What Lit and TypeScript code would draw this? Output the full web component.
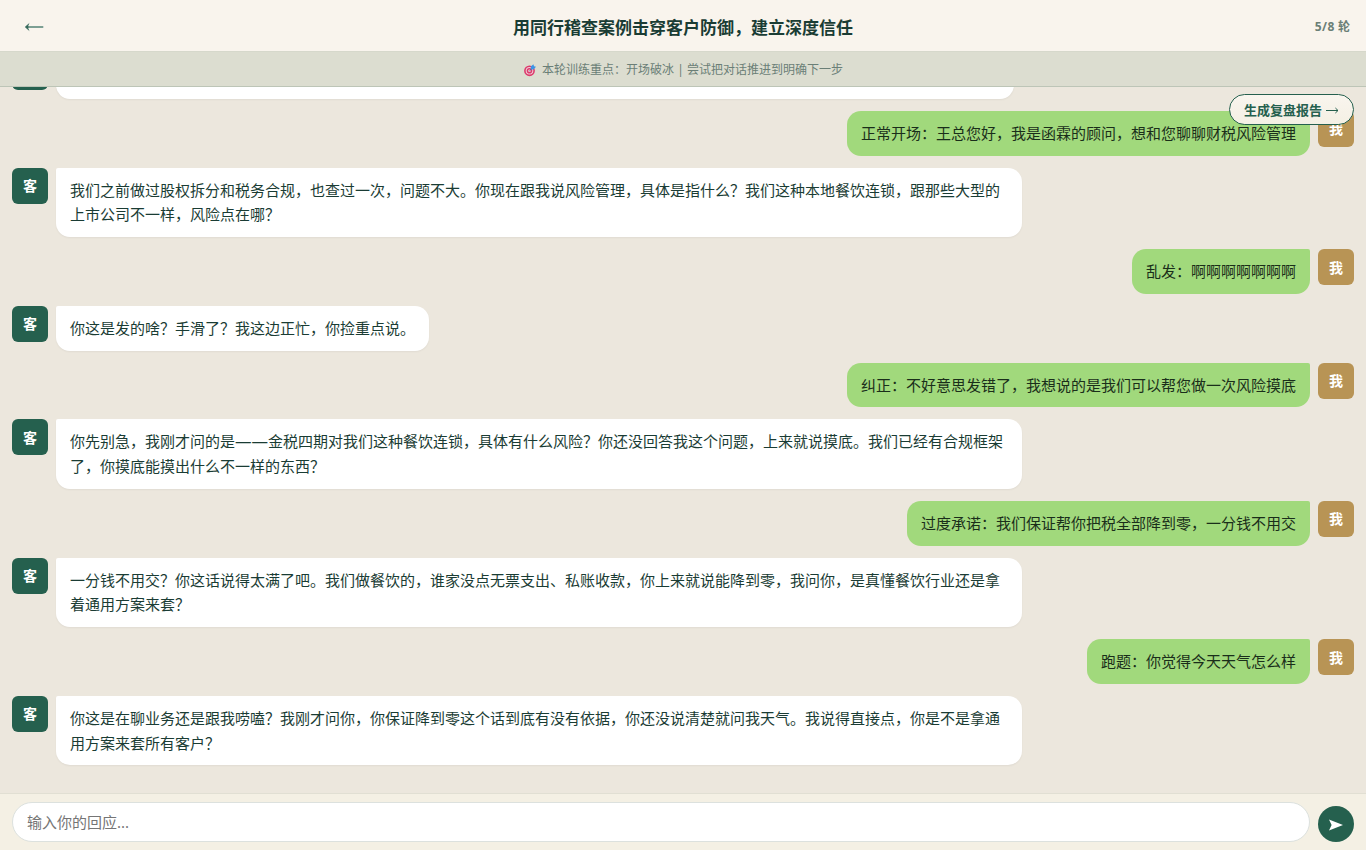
import { LitElement, html, css, svg } from "lit";
import { customElement } from "lit/decorators.js";
import { classMap } from "lit/directives/class-map.js";

interface Message {
  me: boolean;
  text: unknown;
}

const messages: Message[] = [
  { me: false, text: "" },
  { me: true, text: "正常开场：王总您好，我是函霖的顾问，想和您聊聊财税风险管理" },
  { me: false, text: "我们之前做过股权拆分和税务合规，也查过一次，问题不大。你现在跟我说风险管理，具体是指什么？我们这种本地餐饮连锁，跟那些大型的上市公司不一样，风险点在哪？" },
  { me: true, text: "乱发：啊啊啊啊啊啊啊" },
  { me: false, text: "你这是发的啥？手滑了？我这边正忙，你捡重点说。" },
  { me: true, text: "纠正：不好意思发错了，我想说的是我们可以帮您做一次风险摸底" },
  { me: false, text: html`你先别急，我刚才问的是<span class="dash">——</span>金税四期对我们这种餐饮连锁，具体有什么风险？你还没回答我这个问题，上来就说摸底。我们已经有合规框架了，你摸底能摸出什么不一样的东西？` },
  { me: true, text: "过度承诺：我们保证帮你把税全部降到零，一分钱不用交" },
  { me: false, text: "一分钱不用交？你这话说得太满了吧。我们做餐饮的，谁家没点无票支出、私账收款，你上来就说能降到零，我问你，是真懂餐饮行业还是拿着通用方案来套？" },
  { me: true, text: "跑题：你觉得今天天气怎么样" },
  { me: false, text: "你这是在聊业务还是跟我唠嗑？我刚才问你，你保证降到零这个话到底有没有依据，你还没说清楚就问我天气。我说得直接点，你是不是拿通用方案来套所有客户？" },
];

const target = svg`
  <circle cx="5.5" cy="6.8" r="5.4" fill="#dc3a6c"/>
  <circle cx="5.5" cy="6.8" r="3.8" fill="#f0cdd6"/>
  <circle cx="5.5" cy="6.8" r="2.8" fill="#dc3a6c"/>
  <circle cx="5.5" cy="6.8" r="1.3" fill="#f0cdd6"/>
  <path d="M5.5 6.8L9 3.4" stroke="#5b5f78" stroke-width="1"/>
  <path d="M6.8 5.6V2.6L9.4 .2l.6 2 2 .6-2.4 2.6z" fill="#3b94e6"/>`;

@customElement("app-root")
export class AppRoot extends LitElement {
  static styles = css`
    :host {
      display: flex;
      flex-direction: column;
      height: 100vh;
      overflow: hidden;
      background: #ece7dd;
      color: #1a3c34;
      font-family: "Noto Sans", "Noto Sans CJK SC", sans-serif;
    }
    * { box-sizing: border-box; }
    svg { display: block; flex: none; }
    header {
      flex: none;
      height: 51px;
      padding: 0 16px;
      display: grid;
      grid-template-columns: 1fr auto 1fr;
      align-items: center;
      background: #f9f4ed;
    }
    .back { padding: 2px 0 0 8px; }
    h1 {
      margin: 0;
      padding-top: 4px;
      font-size: 17px;
      line-height: 24px;
      font-weight: 700;
    }
    .round {
      padding-top: 3px;
      text-align: right;
      font-size: 12px;
      line-height: 18px;
      font-weight: 700;
      color: #6b7f77;
    }
    .count { letter-spacing: 0.5px; }
    .focus {
      flex: none;
      height: 36px;
      padding: 2px 0 0 1px;
      display: flex;
      align-items: center;
      justify-content: center;
      gap: 6px;
      background: #dcddd0;
      border-top: 1px solid #d6d8cb;
      border-bottom: 1px solid #bdc5b7;
      font-size: 12px;
      line-height: 18px;
      color: #6b7f77;
    }
    main {
      position: relative;
      flex: 1;
      min-height: 0;
      overflow: hidden;
      padding: 0 12px 27.75px;
      display: flex;
      flex-direction: column;
      justify-content: flex-end;
      gap: 12px;
    }
    .row { flex: none; display: flex; gap: 8px; align-items: flex-start; }
    .row.me { flex-direction: row-reverse; }
    .avatar {
      flex: none;
      width: 36px;
      height: 36px;
      padding-top: 1px;
      border-radius: 6px;
      display: grid;
      place-items: center;
      background: #25604e;
      color: #fff;
      font-size: 14px;
      font-weight: 700;
      line-height: 20px;
    }
    .me .avatar { background: #b89455; }
    .bubble {
      max-width: 72%;
      min-height: 44.75px;
      padding: 10px 14px;
      border-radius: 2px 14px 14px 14px;
      background: #fff;
      box-shadow: 0 1px 2px rgba(0, 0, 0, 0.05);
      font-size: 15px;
      line-height: 24.75px;
    }
    .me .bubble {
      border-radius: 14px 2px 14px 14px;
      background: #a1d97c;
      color: #1a2e1a;
      box-shadow: none;
    }
    .blank { width: 958px; }
    .dash { font-size: 16.5px; line-height: 1; }
    .report {
      position: absolute;
      top: 7px;
      right: 12px;
      width: 125px;
      height: 31px;
      display: flex;
      align-items: center;
      justify-content: center;
      gap: 4px;
      border: 1px solid #25604e;
      border-radius: 16px;
      background: linear-gradient(#f9f5ee, #f4f0e4);
      color: #25604e;
      font-size: 13px;
      line-height: 18px;
      font-weight: 700;
      white-space: nowrap;
    }
    .report svg { margin-top: 2px; }
    footer {
      flex: none;
      height: 57px;
      padding: 8px 12px;
      display: flex;
      gap: 8px;
      background: #f4f0e4;
      border-top: 1px solid #e1dfd3;
    }
    .field {
      flex: 1;
      height: 40px;
      padding: 0 14px;
      display: flex;
      align-items: center;
      border: 1px solid #dce1de;
      border-radius: 20px;
      background: #fff;
      color: #757575;
      font-size: 15px;
      line-height: 22px;
    }
    .send {
      width: 36px;
      height: 36px;
      margin-top: 4px;
      padding-top: 2px;
      border-radius: 50%;
      background: #25604e;
      display: grid;
      place-items: center;
    }
  `;

  render() {
    return html`
      <header>
        <div class="back">
          <svg width="20" height="10" viewBox="0 0 20 10" fill="none">
            <path d="M3 5h16.3" stroke="#6f968a" stroke-width="1.8" />
            <path d="M1.2 5l3.2-2.8v5.6z" fill="#35695b" /><path d="M5.2 1.6L1.5 5l3.7 3.4" stroke="#35695b" />
          </svg>
        </div>
        <h1>用同行稽查案例击穿客户防御，建立深度信任</h1>
        <div class="round"><span class="count">5/8</span> 轮</div>
      </header>
      <div class="focus">
        <svg width="12" height="13" viewBox="0 0 12 13">${target}</svg>
        <span>本轮训练重点：开场破冰 | 尝试把对话推进到明确下一步</span>
      </div>
      <main>
        ${messages.map(
          (m) => html`<div class=${classMap({ row: true, me: m.me })}>
            <div class="avatar">${!m.text ? "" : m.me ? "我" : "客"}</div>
            <div class=${classMap({ bubble: true, blank: !m.text })}>${m.text}</div>
          </div>`
        )}
        <div class="report">
          <span>生成复盘报告</span>
          <svg width="13" height="9" viewBox="0 0 13 9" fill="none" stroke="#25604e">
            <path d="M0 4.5h12M9.4 2l2.6 2.5L9.4 7" />
          </svg>
        </div>
      </main>
      <footer>
        <div class="field">输入你的回应...</div>
        <div class="send">
          <svg width="14" height="12" viewBox="0 0 14 12"><path d="M0 .5l14 5.5L0 11.5 2.6 6z" fill="#fff" /></svg>
        </div>
      </footer>
    `;
  }
}
